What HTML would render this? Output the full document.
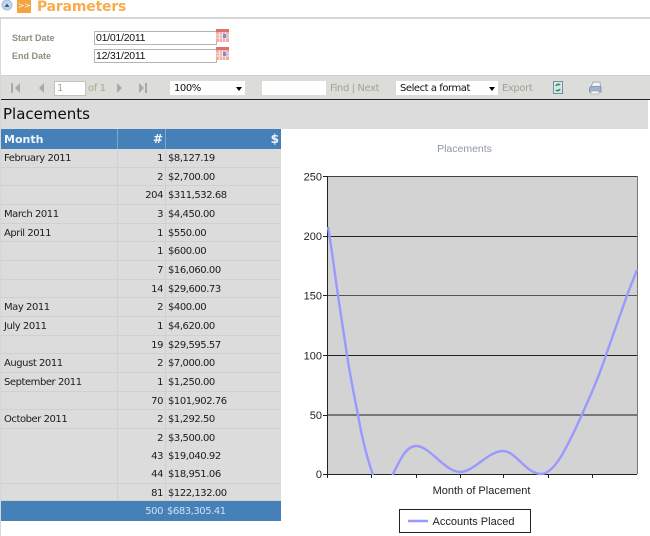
<!DOCTYPE html>
<html><head><meta charset="utf-8"><style>
html,body{margin:0;padding:0;background:#fff;width:650px;height:536px;overflow:hidden}
body{position:relative;font-family:"DejaVu Sans","Liberation Sans",sans-serif;font-size:10px;color:#222}
.a{position:absolute;white-space:nowrap}
.lbl{font:bold 9px "Liberation Sans",sans-serif;color:#8f8f80;left:12px}
.inp{left:94px;width:120px;height:12px;border:1px solid #b5b5ad;background:#fff;font:10.500px/13px "Liberation Sans",sans-serif;letter-spacing:-.25px;color:#111;padding-left:1px;box-sizing:content-box}
.tb{color:#a3a39a;font-size:10px;top:83px;letter-spacing:-.4px}
.sel{background:#fff;height:14px;top:81px;font-size:10px;line-height:15px;color:#111;letter-spacing:-.45px}
.arr{position:absolute;width:0;height:0;border:3.500px solid transparent;border-top:4px solid #000;border-bottom:0;top:6px}
.r{position:absolute;left:1px;width:280px;height:18px;background:#dcdcdc;border-bottom:1px solid #d0d0d0}
.r i{position:absolute;top:0;bottom:-1px;width:1px;background:#d0d0d0}
.r span{position:absolute;top:4px;font-style:normal;color:#1c1c1c;white-space:nowrap;font-size:10px;letter-spacing:-.45px}
.m{left:3px}.n{right:118px}.d{left:167px}
</style></head><body>
<svg class="a" style="left:1px;top:0" width="16" height="16"><circle cx="6" cy="5" r="5" fill="#c3d5ea" stroke="#a8bcd8"/><path d="M3.500 7 L6 3.500 L8.500 7Z" fill="#2f5f9f"/></svg>
<div class="a" style="left:17px;top:0;width:14px;height:13px;background:#f5a33c;color:#fff;font-size:8px;line-height:12px;text-align:center;letter-spacing:-.5px">&gt;&gt;</div>
<div class="a" style="left:37px;top:-2px;font-size:14px;font-weight:bold;color:#f9ac4e;line-height:18px;letter-spacing:-.2px">Parameters</div>
<div class="a" style="left:0;top:17px;width:650px;height:2px;background:#d6d6d6"></div>
<div class="a" style="left:0;top:19px;width:1px;height:517px;background:#d6d6d6"></div>

<div class="a lbl" style="top:33px">Start Date</div>
<div class="a lbl" style="top:51px">End Date</div>
<div class="a inp" style="top:31px">01/01/2011</div>
<div class="a inp" style="top:49px">12/31/2011</div>
<svg class="a" style="left:216px;top:29px" width="14" height="32">
<g><rect x="0" y="0" width="13" height="13" fill="#f2aaa4"/><rect x="0" y="0" width="13" height="3" fill="#d9736b"/><path d="M3.500 3V13M6.500 3V13M9.500 3V13M0 6H13M0 9H13" stroke="#fbe6e2" stroke-width="1"/><rect x="7" y="5" width="3" height="4" fill="#6f93e0"/></g>
<g transform="translate(0,18)"><rect x="0" y="0" width="13" height="13" fill="#f2aaa4"/><rect x="0" y="0" width="13" height="3" fill="#d9736b"/><path d="M3.500 3V13M6.500 3V13M9.500 3V13M0 6H13M0 9H13" stroke="#fbe6e2" stroke-width="1"/><rect x="7" y="5" width="3" height="4" fill="#6f93e0"/></g>
</svg>

<div class="a" style="left:1px;top:75px;width:649px;height:24px;background:#dcdcd8;border-top:1px solid #d0d0cc;box-sizing:border-box"></div>
<div class="a" style="left:1px;top:99px;width:649px;height:1px;background:#222"></div>
<svg class="a" style="left:8px;top:81px" width="145" height="16" fill="#aaaaa4">
<rect x="3" y="2" width="2" height="10"/><path d="M12 2V12L7 7Z"/>
<path d="M36 2V12L31 7Z"/>
<path d="M109 2V12L114 7Z"/>
<path d="M131 2V12L136 7Z"/><rect x="137" y="2" width="2" height="10"/>
</svg>
<div class="a" style="left:54px;top:81px;width:28px;height:13px;background:#fff;border:1px solid #c4c4bc;color:#a3a39a;font-size:10px;line-height:14px;padding-left:2px;box-sizing:content-box"> 1</div>
<div class="a tb" style="left:88px;color:#b0a988">of 1</div>
<div class="a sel" style="left:170px;width:75px"><span style="padding-left:4px">100%</span><b class="arr" style="left:66px"></b></div>
<div class="a" style="left:262px;top:81px;width:64px;height:14px;background:#fff"></div>
<div class="a tb" style="left:330px">Find | Next</div>
<div class="a sel" style="left:396px;width:102px"><span style="padding-left:4px">Select a format</span><b class="arr" style="left:93px"></b></div>
<div class="a tb" style="left:502px">Export</div>
<svg class="a" style="left:552px;top:81px" width="12" height="14"><rect x="1.500" y="0.500" width="9" height="12" fill="#d8e4ee" stroke="#7a8aa0"/><path d="M4 5a2.500 2.500 0 0 1 4-1M8 8a2.500 2.500 0 0 1-4 1" fill="none" stroke="#1f9a3a" stroke-width="1.600"/></svg>
<svg class="a" style="left:588px;top:81px" width="14" height="14"><path d="M5 1H12L12.500 6H3Z" fill="#eef2f6" stroke="#8a9ab0" stroke-width=".7"/><path d="M1.500 7L3 5.500H13V11H1.500Z" fill="#9fb3cc" stroke="#6f88a8" stroke-width=".7"/><rect x="3" y="10" width="8" height="3" fill="#eef2f6" stroke="#8a9ab0" stroke-width=".5"/></svg>

<div class="a" style="left:1px;top:100px;width:647px;height:29px;background:#dcdcdc"></div>
<div class="a" style="left:3px;top:104px;font-size:15px;line-height:21px;color:#0c0c0c">Placements</div>

<div class="a" style="left:1px;top:129px;width:280px;height:20px;background:#4581b8"></div>
<div class="a" style="left:117px;top:129px;width:1px;height:20px;background:#7ea6cc"></div>
<div class="a" style="left:165px;top:129px;width:1px;height:20px;background:#7ea6cc"></div>
<div class="a" style="left:4px;top:132px;font-size:11px;font-weight:bold;color:#f2f6fa;line-height:15px">Month</div>
<div class="a" style="right:487px;top:132px;font-size:12px;font-weight:bold;color:#f2f6fa;line-height:15px">#</div>
<div class="a" style="right:371px;top:132px;font-size:12px;font-weight:bold;color:#f2f6fa;line-height:15px">$</div>

<div class="r" style="top:149px"><i style="left:116px"></i><i style="left:164px"></i><span class="m">February 2011</span><span class="n">1</span><span class="d">$8,127.19</span></div>
<div class="r" style="top:168px;height:17px"><i style="left:116px"></i><i style="left:164px"></i><span class="n">2</span><span class="d">$2,700.00</span></div>
<div class="r" style="top:186px"><i style="left:116px"></i><i style="left:164px"></i><span class="n">204</span><span class="d">$311,532.68</span></div>
<div class="r" style="top:205px"><i style="left:116px"></i><i style="left:164px"></i><span class="m">March 2011</span><span class="n">3</span><span class="d">$4,450.00</span></div>
<div class="r" style="top:224px;height:17px"><i style="left:116px"></i><i style="left:164px"></i><span class="m">April 2011</span><span class="n">1</span><span class="d">$550.00</span></div>
<div class="r" style="top:242px"><i style="left:116px"></i><i style="left:164px"></i><span class="n">1</span><span class="d">$600.00</span></div>
<div class="r" style="top:261px"><i style="left:116px"></i><i style="left:164px"></i><span class="n">7</span><span class="d">$16,060.00</span></div>
<div class="r" style="top:280px;height:17px"><i style="left:116px"></i><i style="left:164px"></i><span class="n">14</span><span class="d">$29,600.73</span></div>
<div class="r" style="top:298px"><i style="left:116px"></i><i style="left:164px"></i><span class="m">May 2011</span><span class="n">2</span><span class="d">$400.00</span></div>
<div class="r" style="top:317px"><i style="left:116px"></i><i style="left:164px"></i><span class="m">July 2011</span><span class="n">1</span><span class="d">$4,620.00</span></div>
<div class="r" style="top:336px;height:17px"><i style="left:116px"></i><i style="left:164px"></i><span class="n">19</span><span class="d">$29,595.57</span></div>
<div class="r" style="top:354px"><i style="left:116px"></i><i style="left:164px"></i><span class="m">August 2011</span><span class="n">2</span><span class="d">$7,000.00</span></div>
<div class="r" style="top:373px"><i style="left:116px"></i><i style="left:164px"></i><span class="m">September 2011</span><span class="n">1</span><span class="d">$1,250.00</span></div>
<div class="r" style="top:392px;height:17px"><i style="left:116px"></i><i style="left:164px"></i><span class="n">70</span><span class="d">$101,902.76</span></div>
<div class="r" style="top:410px"><i style="left:116px"></i><i style="left:164px"></i><span class="m">October 2011</span><span class="n">2</span><span class="d">$1,292.50</span></div>
<div class="r" style="top:429px"><i style="left:116px"></i><i style="left:164px"></i><span class="n">2</span><span class="d">$3,500.00</span></div>
<div class="r" style="top:447px"><i style="left:116px"></i><i style="left:164px"></i><span class="n">43</span><span class="d">$19,040.92</span></div>
<div class="r" style="top:465px"><i style="left:116px"></i><i style="left:164px"></i><span class="n">44</span><span class="d">$18,951.06</span></div>
<div class="r" style="top:484px;height:16px"><i style="left:116px"></i><i style="left:164px"></i><span class="n">81</span><span class="d">$122,132.00</span></div>
<div class="a" style="left:1px;top:501px;width:280px;height:20px;background:#4581b8"></div>
<div class="a" style="right:487px;top:506px;color:#cfe0ef;font-size:10px;letter-spacing:-.45px">500</div>
<div class="a" style="left:167px;top:506px;color:#cfe0ef;font-size:10px;letter-spacing:-.45px">$683,305.41</div>

<svg class="a" style="left:0;top:0" width="650" height="536">
<text x="464.500" y="152" text-anchor="middle" font-family="Liberation Sans" font-size="10.500" fill="#8c99a6">Placements</text>
<rect x="327.500" y="176.500" width="310" height="298" fill="#d3d3d3"/>
<g stroke="#222" stroke-width="1" fill="none" shape-rendering="crispEdges">
<path d="M327 236.500H637M327 355.500H637"/>
<path d="M327 295.500H637" stroke="#555"/>
<path d="M327 415H637" stroke="#777" stroke-width="2"/>
<path d="M327 176.500H637" stroke="#444"/>
<path d="M637.500 176V474" stroke="#777"/>
<path d="M327.500 176V478M323 474.500H637M323 176.500H328M323 236.500H328M323 295.500H328M323 355.500H328M323 415.500H328"/>
<path d="M371.500 474V478M416.500 474V478M460.500 474V478M503.500 474V478M548.500 474V478M592.500 474V478"/>
</g>
<g fill="none" stroke="#9999ff" stroke-width="2.400" stroke-linejoin="round">
<path d="M328 227C332 250 335 275 338 295.500C341 316 344 335 347 355C350 375 354 395 358 415C362 438 367 458 373 475"/>
<path d="M392.500 475C400 460 406 446 416 446C430 446 445 472 460 472C474 472 488 451 503 451C516 451 526 474 541 474C556 474 570 440 582 414.700C590 396 598 380 606 355C613 335 620 315 627 295.500C630 287 634 278 637 270"/>
</g>
<g font-family="Liberation Sans" font-size="11" fill="#222" text-anchor="end">
<text x="322" y="180.500">250</text><text x="322" y="240">200</text><text x="322" y="299.500">150</text><text x="322" y="359.500">100</text><text x="322" y="419">50</text><text x="322" y="478">0</text>
</g>
<text x="481.500" y="494" text-anchor="middle" font-family="Liberation Sans" font-size="11" fill="#222">Month of Placement</text>
<rect x="399.500" y="509.500" width="131" height="23" fill="#fff" stroke="#222"/>
<path d="M408 521H428" stroke="#9999ff" stroke-width="2.400"/>
<text x="432.500" y="525" font-family="Liberation Sans" font-size="11" fill="#222">Accounts Placed</text>
</svg>
</body></html>
